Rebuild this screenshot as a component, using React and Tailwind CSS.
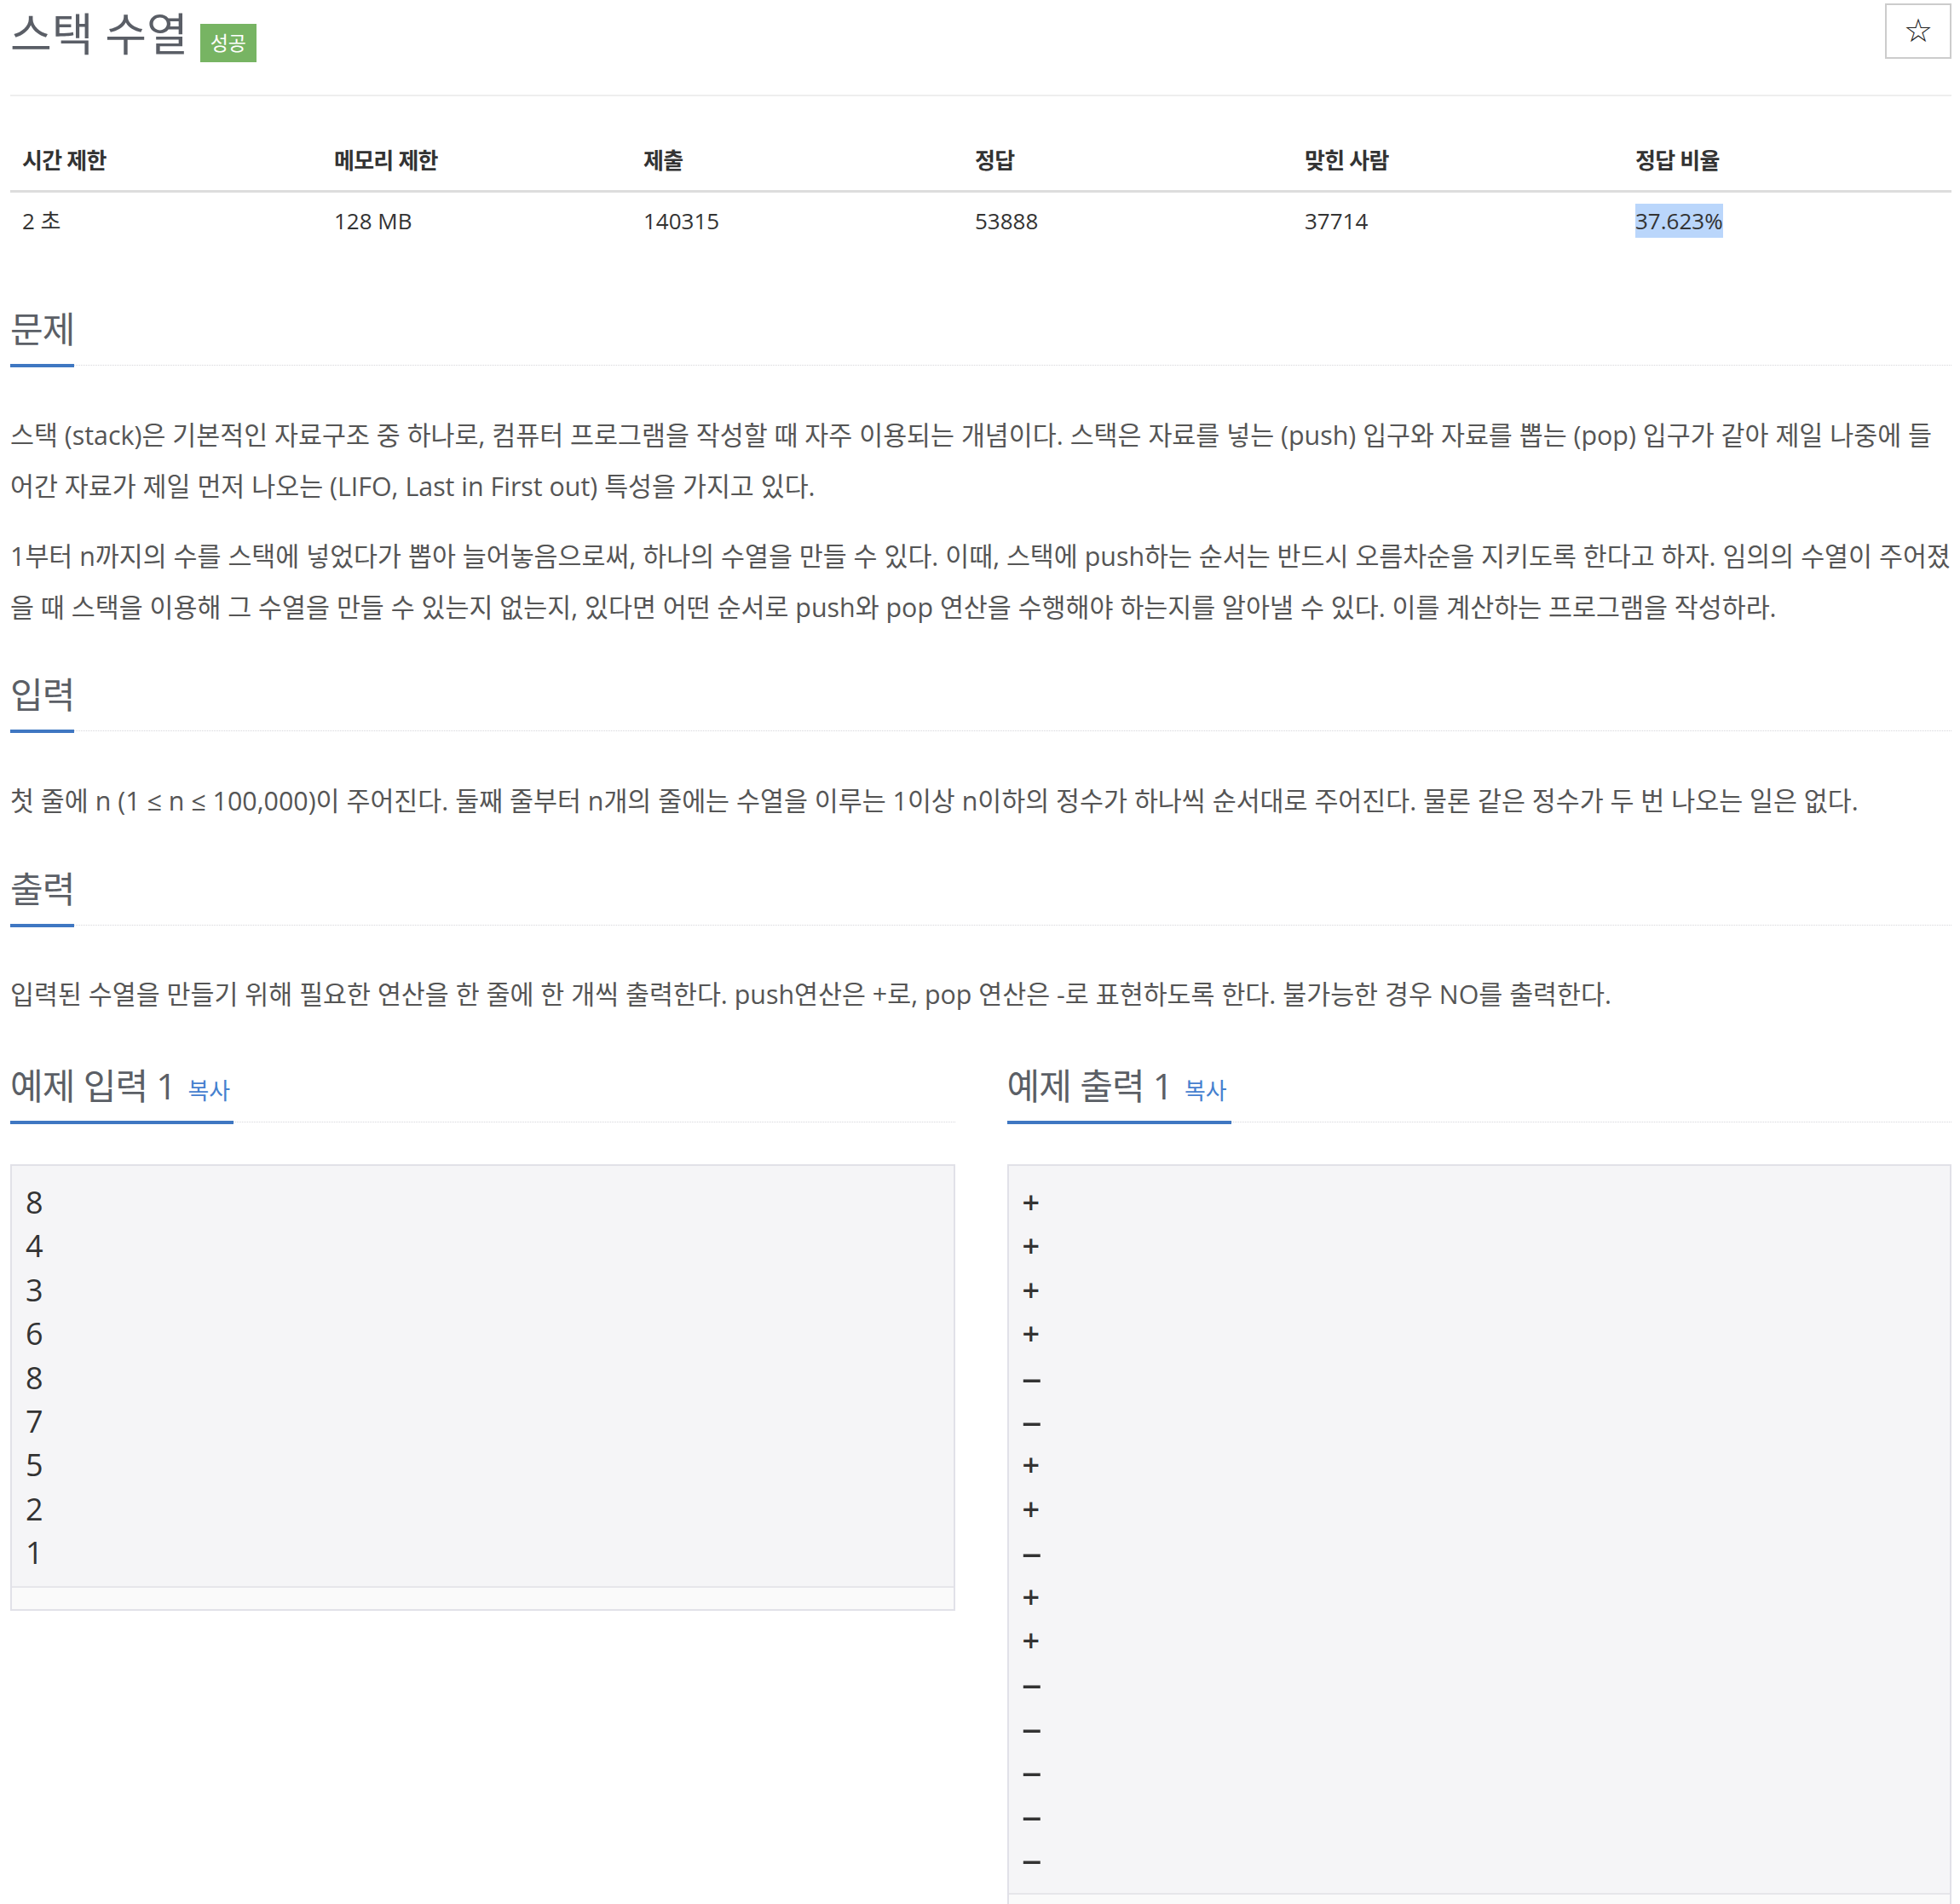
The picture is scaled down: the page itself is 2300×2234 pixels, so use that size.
import React from 'react';

const FONT = { fontFamily: '"Open Sans", "Noto Sans", "Noto Sans CJK KR", sans-serif' };

const stats = [
  { label: '시간 제한', value: '2 초' },
  { label: '메모리 제한', value: '128 MB' },
  { label: '제출', value: '140315' },
  { label: '정답', value: '53888' },
  { label: '맞힌 사람', value: '37714' },
  { label: '정답 비율', value: '37.623%', selected: true },
];

const sampleInput = ['8', '4', '3', '6', '8', '7', '5', '2', '1'];
const sampleOutput = ['+', '+', '+', '+', '-', '-', '+', '+', '-', '+', '+', '-', '-', '-', '-', '-'];

const SectionHeading = ({ title, barWidth, copy, className = '' }) => (
  <div className={className}>
    <h2 className="h-[48px] text-[42px] leading-[48px] text-[#5b5f66] tracking-[-0.02em] whitespace-nowrap">
      {title}
      {copy && <span className="ml-[14px] text-[27px] text-[#4580cf] tracking-normal">복사</span>}
    </h2>
    <div className="mt-[17px] flex items-start">
      <div className="h-[4px] bg-[#3f77c2]" style={{ width: barWidth }} />
      <div className="mt-[1px] flex-1 border-t border-dotted border-[#d6d6db]" />
    </div>
  </div>
);

const SampleBox = ({ lines, className = '' }) => (
  <div className={`mt-[47px] border-2 border-[#e1e1e8] bg-[#f5f5f7] ${className}`}>
    <div className="pl-[16px] pt-[17px] pb-[13px] text-[36px] leading-[51.4px] text-[#333]">
      {lines.map((line, i) => (
        <div key={i}>
          {line === '-' ? (
            <span className="-ml-[2px] inline-block origin-left scale-x-[2.2] font-semibold">-</span>
          ) : line === '+' ? (
            <span className="font-semibold">+</span>
          ) : (
            line
          )}
        </div>
      ))}
    </div>
    <div className="h-[27px] border-t-2 border-[#e6e6ea] bg-[#fafafa]" />
  </div>
);

export default function App() {
  return (
    <div className="min-h-[2234px] bg-white pl-[12px] pr-[10px]" style={FONT}>
      {/* Title */}
      <div className="flex h-[113px] items-start justify-between border-b-2 border-[#eeeeee]">
        <div className="flex items-start">
          <h1 className="text-[53px] leading-[80px] text-[#5a5e66]">스택 수열</h1>
          <span className="ml-[14px] mt-[28px] flex h-[45px] w-[66px] items-center justify-center bg-[#77b463] text-[23px] text-white">
            성공
          </span>
        </div>
        <button className="mt-[4px] flex h-[65px] w-[78px] items-center justify-center border-2 border-[#cccccc] bg-white text-[38px] text-[#222]" style={{ fontFamily: '"DejaVu Sans", sans-serif' }}>
          ☆
        </button>
      </div>

      {/* Stats table */}
      <div className="mt-[40px] text-[26px] text-[#333]">
        <div className="grid h-[73px] grid-cols-[366px_363px_389px_387px_388px_1fr] items-center border-b-[3px] border-[#dddddd]">
          {stats.map((s) => (
            <div key={s.label} className="pl-[14px] text-[26px] font-bold tracking-[-0.03em]">{s.label}</div>
          ))}
        </div>
        <div className="grid h-[66px] grid-cols-[366px_363px_389px_387px_388px_1fr] items-center">
          {stats.map((s) => (
            <div key={s.label} className="pl-[14px]">
              <span className={s.selected ? 'bg-[#bad6fb] py-[2px]' : ''}>{s.value}</span>
            </div>
          ))}
        </div>
      </div>

      {/* 문제 */}
      <SectionHeading title="문제" barWidth={75} className="mt-[70px]" />
      <div className="text-[30.4px] leading-[60px] text-[#555] whitespace-nowrap">
        <p className="mt-[50px]">
          스택 (stack)은 기본적인 자료구조 중 하나로, 컴퓨터 프로그램을 작성할 때 자주 이용되는 개념이다. 스택은 자료를 넣는 (push) 입구와 자료를 뽑는 (pop) 입구가 같아 제일 나중에 들
          <br />
          어간 자료가 제일 먼저 나오는 (LIFO, Last in First out) 특성을 가지고 있다.
        </p>
        <p className="mt-[22px]">
          1부터 n까지의 수를 스택에 넣었다가 뽑아 늘어놓음으로써, 하나의 수열을 만들 수 있다. 이때, 스택에 push하는 순서는 반드시 오름차순을 지키도록 한다고 하자. 임의의 수열이 주어졌
          <br />
          을 때 스택을 이용해 그 수열을 만들 수 있는지 없는지, 있다면 어떤 순서로 push와 pop 연산을 수행해야 하는지를 알아낼 수 있다. 이를 계산하는 프로그램을 작성하라.
        </p>
      </div>

      {/* 입력 */}
      <SectionHeading title="입력" barWidth={75} className="mt-[48px]" />
      <p className="mt-[50px] text-[30.4px] leading-[60px] text-[#555] whitespace-nowrap">
        첫 줄에 n (1 ≤ n ≤ 100,000)이 주어진다. 둘째 줄부터 n개의 줄에는 수열을 이루는 1이상 n이하의 정수가 하나씩 순서대로 주어진다. 물론 같은 정수가 두 번 나오는 일은 없다.
      </p>

      {/* 출력 */}
      <SectionHeading title="출력" barWidth={75} className="mt-[49px]" />
      <p className="mt-[49px] text-[30.4px] leading-[60px] text-[#555] whitespace-nowrap">
        입력된 수열을 만들기 위해 필요한 연산을 한 줄에 한 개씩 출력한다. push연산은 +로, pop 연산은 -로 표현하도록 한다. 불가능한 경우 NO를 출력한다.
      </p>

      {/* 예제 */}
      <div className="mt-[53px] grid grid-cols-2 gap-x-[61px] items-start">
        <div>
          <SectionHeading title="예제 입력 1" barWidth={262} copy />
          <SampleBox lines={sampleInput} />
        </div>
        <div>
          <SectionHeading title="예제 출력 1" barWidth={263} copy />
          <SampleBox lines={sampleOutput} />
        </div>
      </div>
    </div>
  );
}
